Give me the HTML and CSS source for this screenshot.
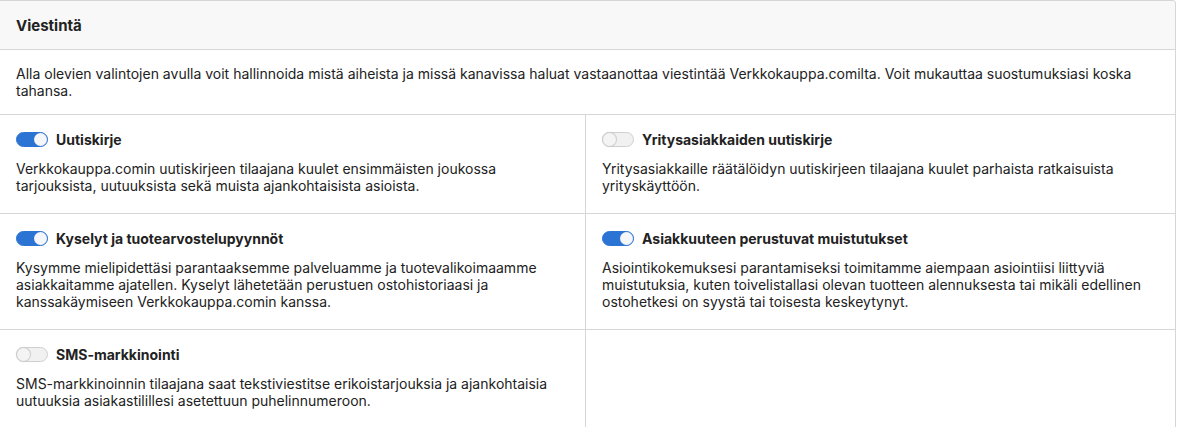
FILE: index.html
```html
<!DOCTYPE html>
<html lang="fi">
<head>
    <meta charset="UTF-8">
    <meta name="viewport" content="width=device-width, initial-scale=1.0">
    <title>Viestintä</title>
    <link rel="stylesheet" href="styles.css">
</head>
<body>
    <div class="card">
        <div class="card-header">Viestintä</div>
        <p class="intro">Alla olevien valintojen avulla voit hallinnoida mistä aiheista ja missä kanavissa haluat vastaanottaa viestintää Verkkokauppa.comilta. Voit mukauttaa suostumuksiasi koska tahansa.</p>
        <div class="options">
            <div class="option">
                <label class="option-title"><span class="toggle on"></span>Uutiskirje</label>
                <p class="option-desc">Verkkokauppa.comin uutiskirjeen tilaajana kuulet ensimmäisten joukossa tarjouksista, uutuuksista sekä muista ajankohtaisista asioista.</p>
            </div>
            <div class="option">
                <label class="option-title"><span class="toggle"></span>Yritysasiakkaiden uutiskirje</label>
                <p class="option-desc">Yritysasiakkaille räätälöidyn uutiskirjeen tilaajana kuulet parhaista ratkaisuista yrityskäyttöön.</p>
            </div>
            <div class="option">
                <label class="option-title"><span class="toggle on"></span>Kyselyt ja tuotearvostelupyynnöt</label>
                <p class="option-desc">Kysymme mielipidettäsi parantaaksemme palveluamme ja tuotevalikoimaamme asiakkaitamme ajatellen. Kyselyt lähetetään perustuen ostohistoriaasi ja kanssakäymiseen Verkkokauppa.comin kanssa.</p>
            </div>
            <div class="option">
                <label class="option-title"><span class="toggle on"></span>Asiakkuuteen perustuvat muistutukset</label>
                <p class="option-desc">Asiointikokemuksesi parantamiseksi toimitamme aiempaan asiointiisi liittyviä muistutuksia, kuten toivelistallasi olevan tuotteen alennuksesta tai mikäli edellinen ostohetkesi on syystä tai toisesta keskeytynyt.</p>
            </div>
            <div class="option">
                <label class="option-title"><span class="toggle"></span>SMS-markkinointi</label>
                <p class="option-desc">SMS-markkinoinnin tilaajana saat tekstiviestitse erikoistarjouksia ja ajankohtaisia uutuuksia asiakastilillesi asetettuun puhelinnumeroon.</p>
            </div>
            <div class="option"></div>
        </div>
    </div>
</body>
</html>
```

FILE: styles.css
```css
body {
    margin: 0;
    background: #fff;
    font-family: Inter, "Liberation Sans", Arial, sans-serif;
    font-size: 14px;
    color: #222;
}
.card {
    width: 1175px;
    margin-left: -1px;
    border: 1px solid #d6d6d6;
    border-bottom: none;
    border-radius: 0 4px 0 0;
}
.card-header {
    height: 48px;
    padding: 0 16px;
    display: flex;
    align-items: center;
    background: #f8f8f8;
    border-bottom: 1px solid #d6d6d6;
    border-radius: 0 4px 0 0;
    font-size: 15px;
    font-weight: 700;
}
.intro {
    margin: 0;
    padding: 16px 16px 15px;
    line-height: 16.5px;
    border-bottom: 1px solid #d6d6d6;
}
.options {
    display: grid;
    grid-template-columns: 586px 1fr;
}
.option {
    padding: 16px 16px 19px;
    border-bottom: 1px solid #d6d6d6;
}
.option:nth-child(odd) {
    border-right: 1px solid #d6d6d6;
}
.option-title {
    display: flex;
    align-items: center;
    gap: 8px;
    height: 16px;
    font-weight: 700;
}
.option-desc {
    margin: 13px 0 0;
    line-height: 17px;
}
.toggle {
    position: relative;
    width: 32px;
    height: 15px;
    border-radius: 8px;
    background: #f1f1f1;
    border: 1px solid #cfcfcf;
    box-sizing: border-box;
}
.toggle::after {
    content: "";
    position: absolute;
    left: 0;
    top: 0;
    width: 13px;
    height: 13px;
    border-radius: 50%;
    background: #f4f4f4;
    box-shadow: 0 0 1px 1px #cccccc;
}
.toggle.on {
    background: #2c74d4;
    border-color: #2c74d4;
}
.toggle.on::after {
    left: auto;
    right: 0;
    background: #f4f6fa;
    box-shadow: none;
}
```
